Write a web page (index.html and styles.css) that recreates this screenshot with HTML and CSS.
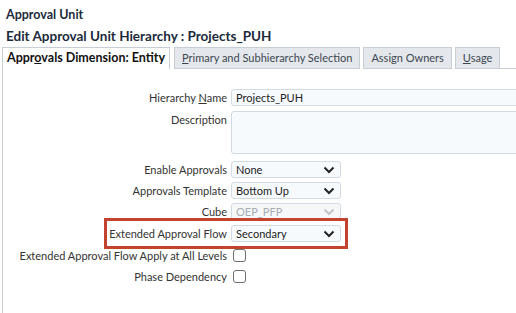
FILE: index.html
```html
<!DOCTYPE html>
<html lang="en">
<head>
  <meta charset="UTF-8" />
  <title>Approval Unit</title>
  <link rel="stylesheet" href="styles.css">
</head>
<body>

  <div class="page-head">
    <h1>Approval Unit</h1>
    <h2>Edit Approval Unit Hierarchy : Projects_PUH</h2>
  </div>

  <div class="tabs">
    <div class="tab active">Appr<u>o</u>vals Dimension: Entity</div>
    <div class="tab"><u>P</u>rimary and Subhierarchy Selection</div>
    <div class="tab">Assign Owners</div>
    <div class="tab"><u>U</u>sage</div>
    <div class="tab-fill"></div>
  </div>

  <div class="panel">
    <div class="form">
      <div class="row r-name">
        <label>Hierarchy <u>N</u>ame</label>
        <div class="text-input">Projects_PUH</div>
      </div>
      <div class="row r-desc">
        <label>Description</label>
        <div class="text-area"></div>
      </div>
      <div class="row">
        <label>Enable Approvals</label>
        <div class="select">
          <span>None</span>
          <svg width="12" height="8" viewBox="0 0 12 8"><path d="M1.5 1.5 L6 6 L10.5 1.5" fill="none" stroke="#222" stroke-width="2"/></svg>
        </div>
      </div>
      <div class="row">
        <label>Approvals Template</label>
        <div class="select">
          <span>Bottom Up</span>
          <svg width="12" height="8" viewBox="0 0 12 8"><path d="M1.5 1.5 L6 6 L10.5 1.5" fill="none" stroke="#222" stroke-width="2"/></svg>
        </div>
      </div>
      <div class="row r-cube">
        <label>Cube</label>
        <div class="select disabled">
          <span>OEP_PFP</span>
          <svg width="12" height="8" viewBox="0 0 12 8"><path d="M1.5 1.5 L6 6 L10.5 1.5" fill="none" stroke="#c2c6ca" stroke-width="2"/></svg>
        </div>
      </div>
      <div class="row">
        <label>Extended Approval Flow</label>
        <div class="select">
          <span>Secondary</span>
          <svg width="12" height="8" viewBox="0 0 12 8"><path d="M1.5 1.5 L6 6 L10.5 1.5" fill="none" stroke="#222" stroke-width="2"/></svg>
        </div>
        <div class="callout"></div>
      </div>
      <div class="row r-check first">
        <label>Extended Approval Flow Apply at All Levels</label>
        <div class="checkbox"></div>
      </div>
      <div class="row r-check">
        <label>Phase Dependency</label>
        <div class="checkbox"></div>
      </div>
    </div>
  </div>

</body>
</html>
```

FILE: styles.css
```css
html, body {
  height: 100%;
}

body {
  margin: 0;
  font-family: Lato, "Liberation Sans", Arial, sans-serif;
  font-size: 11px;
  color: #333;
  background: #fff;
  overflow: hidden;
  display: flex;
  flex-direction: column;
}

.page-head {
  padding: 5px 6px 0;
}

.page-head h1,
.page-head h2 {
  margin: 0;
  font-size: 13.5px;
  font-weight: bold;
  color: #1b2a3a;
  line-height: 20px;
}

.page-head h1 {
  font-size: 12.5px;
  margin-bottom: 1px;
}

.tabs {
  display: flex;
  align-items: flex-end;
  margin-top: 1px;
  padding-left: 2px;
}

.tab {
  height: 20px;
  line-height: 20px;
  padding: 0 7px;
  margin-right: 3px;
  background: #e4e8ec;
  border: 1px solid #c7ced6;
  color: #3c4650;
  white-space: nowrap;
}

.tab.active {
  background: #fff;
  color: #111;
  font-size: 12.5px;
  font-weight: bold;
  height: 21px;
  border-bottom: none;
  padding: 0 4px;
  margin-right: 4px;
}

.tab-fill {
  flex: 1;
  margin-left: -3px;
  border-bottom: 1px solid #c7ced6;
}

.panel {
  flex: 1;
  border-left: 1px solid #c7ced6;
  margin-left: 2px;
  padding-top: 20px;
}

.form {
  display: flex;
  flex-direction: column;
}

.row {
  display: flex;
  align-items: center;
  position: relative;
  margin-bottom: 4px;
}

.row label {
  width: 224px;
  flex: none;
  text-align: right;
  padding-right: 4px;
  color: #333;
  white-space: nowrap;
}

.r-name {
  margin-bottom: 5px;
}

.r-desc {
  align-items: flex-start;
  margin-bottom: 7px;
}

.r-desc label {
  padding-top: 2px;
}

.r-cube {
  margin-bottom: 5px;
}

.text-input,
.text-area,
.select {
  box-sizing: border-box;
  border: 1px solid #d3dae1;
  border-radius: 3px;
  background: #f7fafd;
  color: #222;
}

.text-input {
  height: 17px;
  line-height: 15px;
  padding: 0 4px;
  flex: 1;
  margin-right: -10px;
}

.text-area {
  height: 43px;
  flex: 1;
  margin-right: -10px;
}

.select {
  width: 110px;
  height: 17px;
  display: flex;
  align-items: center;
  justify-content: space-between;
  padding: 0 5px 0 4px;
}

.select.disabled {
  color: #a8adb2;
  background: #f5f7f9;
}

.callout {
  position: absolute;
  left: 101px;
  top: -7px;
  width: 238px;
  height: 25px;
  border: 3px solid #c4432f;
}

.r-check {
  height: 14px;
  margin-bottom: 7px;
}

.r-check.first {
  margin-top: 2px;
}

.checkbox {
  width: 11px;
  height: 11px;
  border: 1px solid #6e6e6e;
  border-radius: 3px;
  margin-left: 2px;
  background: #fff;
}
```
